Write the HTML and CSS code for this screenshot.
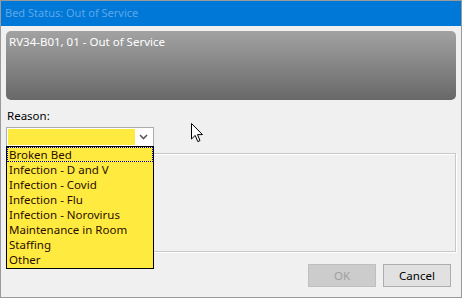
FILE: index.html
```html
<!DOCTYPE html>
<html lang="en">
<head>
  <meta charset="UTF-8">
  <title>Bed Status: Out of Service</title>
  <link rel="stylesheet" href="styles.css">
</head>
<body>
  <div class="window">
    <div class="title-bar">Bed Status: Out of Service</div>

    <div class="content">
      <!-- Bed header panel -->
      <div class="bed-panel">RV34-B01, 01 - Out of Service</div>

      <label class="field-label">Reason:</label>
      <div class="combo">
        <div class="combo-value"></div>
        <div class="combo-arrow">
          <svg width="9" height="6" viewBox="0 0 9 6"><path d="M1 1 L4.5 4.5 L8 1" fill="none" stroke="#5a5a5a" stroke-width="1.6"/></svg>
        </div>
        <!-- Open drop-down list -->
        <ul class="combo-list">
          <li class="focused">Broken Bed</li>
          <li>Infection - D and V</li>
          <li>Infection - Covid</li>
          <li>Infection - Flu</li>
          <li>Infection - Norovirus</li>
          <li>Maintenance in Room</li>
          <li>Staffing</li>
          <li>Other</li>
        </ul>
      </div>

      <div class="notes-box"></div>

      <div class="button-row">
        <button class="btn" disabled>OK</button>
        <button class="btn">Cancel</button>
      </div>
    </div>

    <svg class="cursor" width="13" height="20" viewBox="0 0 13 20">
      <path d="M0.5 0.5 L0.5 16 L4.2 12.4 L6.8 18.6 L9 17.6 L6.5 11.6 L11.5 11.6 Z" fill="#fff" stroke="#000" stroke-width="1"/>
    </svg>
  </div>
</body>
</html>
```

FILE: styles.css
```css
body {
  margin: 0;
  padding: 0;
  font-family: 'Noto Sans', sans-serif;
  font-size: 11.5px;
  background-color: #6e6e6e;
}

.window {
  position: relative;
  width: 462px;
  height: 298px;
  box-sizing: border-box;
  border: 1px solid #9a9a9a;
  background-color: #f0f0f0;
  overflow: hidden;
}

.title-bar {
  height: 25px;
  line-height: 24px;
  padding-left: 4px;
  font-size: 11px;
  background-color: #0078d7;
  color: #5fa7e8;
}

.content {
  display: flex;
  flex-direction: column;
  padding: 5px 5px 0 5px;
}

.bed-panel {
  height: 69px;
  box-sizing: border-box;
  padding: 3px 3px;
  border-radius: 5px;
  background: linear-gradient(#a2a2a2, #686868);
  color: #fff;
}

.field-label {
  margin-top: 7px;
  height: 20px;
  line-height: 18px;
  padding-left: 1px;
  color: #000;
}

.combo {
  position: relative;
  display: flex;
  width: 148px;
  height: 20px;
  box-sizing: border-box;
  border: 1px solid #acacac;
  background-color: #fff;
  padding: 1px;
}

.combo-value {
  flex: 1;
  background-color: #ffeb3f;
}

.combo-arrow {
  width: 17px;
  display: flex;
  align-items: center;
  justify-content: center;
}

.combo-list {
  position: absolute;
  top: 18px;
  left: -1px;
  width: 148px;
  box-sizing: border-box;
  margin: 0;
  padding: 0 0 1px 0;
  list-style: none;
  border: 1px solid #000;
  background-color: #ffeb3f;
  z-index: 2;
}

.combo-list li {
  height: 15px;
  line-height: 16px;
  padding-left: 2px;
  color: #2a0d00;
  box-sizing: border-box;
}

.combo-list li.focused {
  outline: 1px dotted #0000c8;
  outline-offset: -1px;
}

.notes-box {
  margin-top: 6px;
  height: 99px;
  box-sizing: border-box;
  border: 1px solid #c8c8c8;
  box-shadow: inset 1px 1px 0 #fff, 1px 1px 0 #fff;
}

.button-row {
  display: flex;
  justify-content: flex-end;
  gap: 7px;
  margin-top: 12px;
  padding-right: 5px;
}

.btn {
  width: 68px;
  height: 23px;
  font-family: 'Noto Sans', sans-serif;
  font-size: 11.5px;
  padding: 0;
  border: 1px solid #adadad;
  background-color: #e1e1e1;
  color: #000;
}

.btn:disabled {
  border-color: #bfbfbf;
  background-color: #cccccc;
  color: #a0a0a0;
}

.cursor {
  position: absolute;
  left: 190px;
  top: 122px;
}
```
